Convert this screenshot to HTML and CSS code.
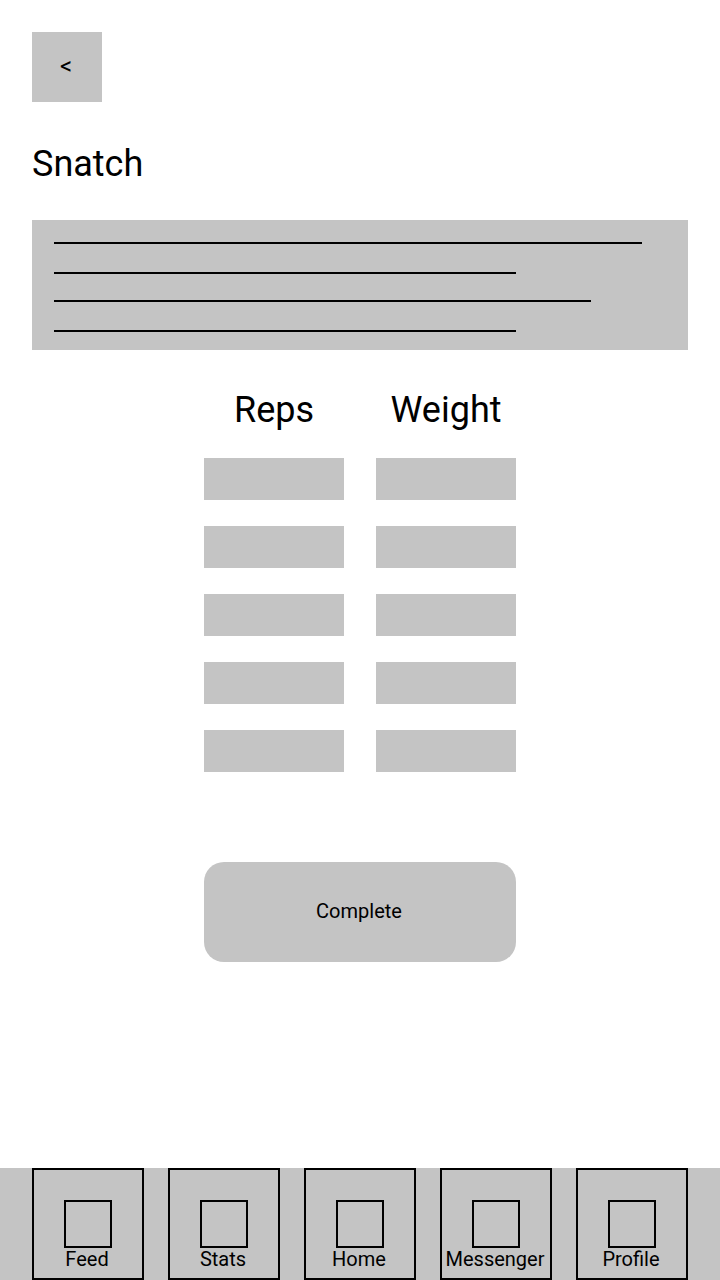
FILE: index.html
```html
<!DOCTYPE html>
<html lang="en">
<head>
<meta charset="utf-8">
<meta name="viewport" content="width=device-width, initial-scale=1">
<title>Snatch</title>
<link rel="stylesheet" href="styles.css">
</head>
<body>
<main class="content">
  <button class="back" type="button" aria-label="Back">&lt;</button>
  <h1 class="title">Snatch</h1>
  <div class="description">
    <hr class="line line-long">
    <hr class="line line-short">
    <hr class="line line-medium">
    <hr class="line line-short">
  </div>
  <form class="log">
    <div class="sets">
      <h2 class="heading" id="reps">Reps</h2>
      <h2 class="heading" id="weight">Weight</h2>
      <input class="field" type="text" aria-labelledby="reps">
      <input class="field" type="text" aria-labelledby="weight">
      <input class="field" type="text" aria-labelledby="reps">
      <input class="field" type="text" aria-labelledby="weight">
      <input class="field" type="text" aria-labelledby="reps">
      <input class="field" type="text" aria-labelledby="weight">
      <input class="field" type="text" aria-labelledby="reps">
      <input class="field" type="text" aria-labelledby="weight">
      <input class="field" type="text" aria-labelledby="reps">
      <input class="field" type="text" aria-labelledby="weight">
    </div>
    <button class="complete" type="button">Complete</button>
  </form>
</main>
<nav class="tabs">
  <a class="tab" href="#feed"><span class="tab-icon"></span><span class="tab-label">Feed</span></a>
  <a class="tab" href="#stats"><span class="tab-icon"></span><span class="tab-label">Stats</span></a>
  <a class="tab" href="#home"><span class="tab-icon"></span><span class="tab-label">Home</span></a>
  <a class="tab" href="#messenger"><span class="tab-icon"></span><span class="tab-label">Messenger</span></a>
  <a class="tab" href="#profile"><span class="tab-icon"></span><span class="tab-label">Profile</span></a>
</nav>
</body>
</html>
```

FILE: styles.css
```css
* {
  box-sizing: border-box;
}

body {
  display: flex;
  flex-direction: column;
  min-height: 100vh;
  margin: 0;
  background: #fff;
  color: #000;
  font-family: Roboto, "Liberation Sans", sans-serif;
  font-size: 20px;
  line-height: 22px;
}

button,
input {
  margin: 0;
  border: 0;
  background: #c4c4c4;
  color: #000;
  font: inherit;
}

button {
  padding: 0 2px 2px 0;
}

.content {
  display: flex;
  flex: 1;
  flex-direction: column;
  align-items: flex-start;
  padding: 32px;
}

.back {
  width: 70px;
  height: 70px;
  font-size: 24px;
}

.title,
.heading {
  margin: 0;
  font-size: 36px;
  font-weight: 400;
  line-height: 44px;
}

.title {
  margin-top: 40px;
}

.description {
  display: flex;
  flex-direction: column;
  align-self: stretch;
  margin-top: 34px;
  padding: 22px 46px 18px 22px;
  background: #c4c4c4;
}

.line {
  height: 2px;
  margin: 0;
  border: 0;
  background: #000;
}

.line-long {
  width: 100%;
  margin-bottom: 28px;
}

.line-medium {
  width: 91.4%;
  margin: 26px 0 28px;
}

.line-short {
  width: 78.6%;
}

.log {
  display: flex;
  flex-direction: column;
  gap: 90px;
  width: 312px;
  margin: 38px auto 0;
}

.sets {
  display: grid;
  grid-template-columns: 1fr 1fr;
  gap: 26px 32px;
}

.heading {
  text-align: center;
}

.field {
  width: 100%;
  height: 42px;
  padding: 0 12px;
}

.complete {
  height: 100px;
  border-radius: 20px;
}

.tabs {
  display: flex;
  justify-content: space-between;
  padding: 0 32px;
  background: #c4c4c4;
}

.tab {
  display: flex;
  flex-direction: column;
  align-items: center;
  width: 112px;
  height: 112px;
  padding-top: 30px;
  border: 2px solid #000;
  color: inherit;
  text-decoration: none;
}

.tab-icon {
  width: 48px;
  height: 48px;
  border: 2px solid #000;
}

.tab-label {
  padding-right: 2px;
}
```
